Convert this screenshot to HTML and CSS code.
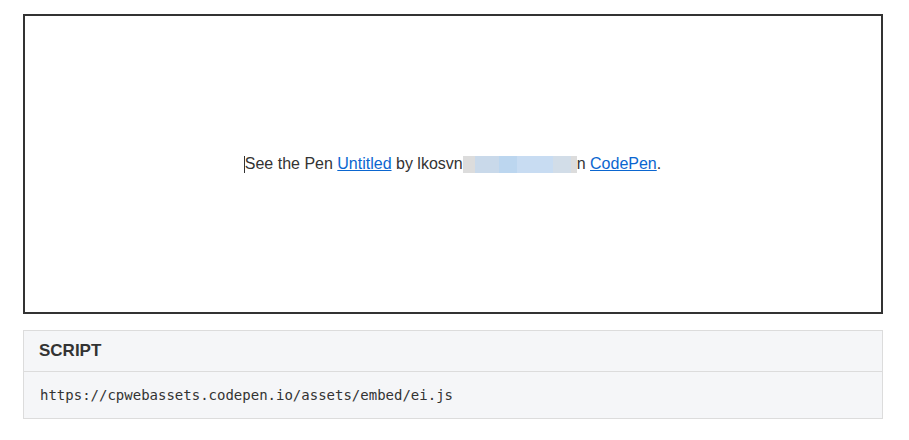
FILE: index.html
```html
<!DOCTYPE html>
<html>
<head>
<meta charset="utf-8">
<link rel="stylesheet" href="styles.css">
</head>
<body>
<div class="page">
  <div class="embed">
    <p class="line"><span class="caret"></span>See the Pen <a href="#">Untitled</a> by lkosvn<span class="blur"><i class="b1"></i><i class="b2"></i><i class="b3"></i><i class="b4"></i><i class="b5"></i><i class="b6"></i></span>n <a href="#">CodePen</a>.</p>
  </div>
  <div class="panel">
    <div class="panel-head">SCRIPT</div>
    <div class="panel-body">https://cpwebassets.codepen.io/assets/embed/ei.js</div>
  </div>
</div>
</body>
</html>
```
FILE: styles.css
```css
body {
  margin: 0;
  background: #fff;
  font-family: "Liberation Sans", Arial, sans-serif;
  color: #333;
}
.page {
  padding: 14px 26px 0 23px;
  display: flex;
  flex-direction: column;
  gap: 16px;
}
.embed {
  height: 296px;
  border: 2px solid #333;
  display: flex;
  align-items: center;
  justify-content: center;
}
.line {
  margin: 0;
  font-size: 16px;
  color: #333;
  display: flex;
  align-items: center;
  white-space: pre;
  padding-right: 1px;
}
.line a {
  color: #0b66d0;
  text-decoration: underline;
}
.caret {
  width: 1px;
  height: 17px;
  background: #333;
  margin-right: 0;
}
.blur {
  display: inline-flex;
  height: 17px;
}
.blur i { display: block; height: 17px; }
.b1 { width: 12px; background: #dcdcdc; }
.b2 { width: 24px; background: #c9d9ea; }
.b3 { width: 18px; background: #bcd6ef; }
.b4 { width: 36px; background: #c8dcf2; }
.b5 { width: 18px; background: #d2dde8; }
.b6 { width: 6px; background: #dcdcdc; }
.panel {
  border: 1px solid #dcdcdc;
  background: #f5f6f8;
}
.panel-head {
  height: 40px;
  display: flex;
  align-items: center;
  padding-left: 15px;
  font-weight: bold;
  font-size: 17px;
  color: #333;
  border-bottom: 1px solid #dcdcdc;
}
.panel-body {
  height: 46px;
  display: flex;
  align-items: center;
  padding-left: 16px;
  font-family: "DejaVu Sans Mono", monospace;
  font-size: 14px;
  color: #333;
}
```
